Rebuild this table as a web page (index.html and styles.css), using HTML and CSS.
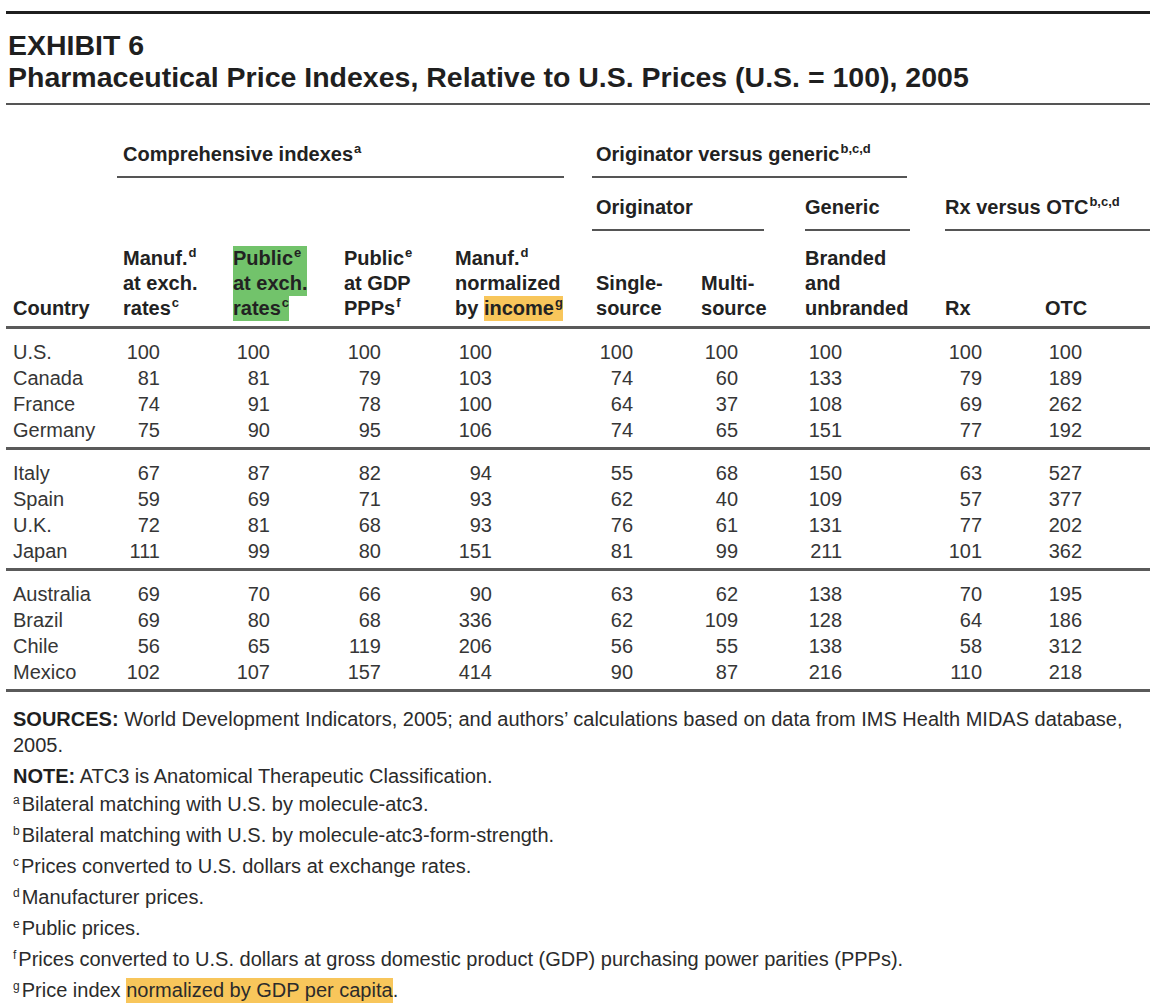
FILE: index.html
```html
<!DOCTYPE html>
<html lang="en">
<head>
<meta charset="utf-8">
<title>Exhibit 6</title>
<link rel="stylesheet" href="styles.css">
</head>
<body>
<div class="page">
  <div class="rule-top"></div>
  <h1 class="title">
    <span class="exhibit">EXHIBIT 6</span>
    <span class="subtitle">Pharmaceutical Price Indexes, Relative to U.S. Prices (U.S. = 100), 2005</span>
  </h1>
  <div class="rule-mid"></div>

  <table class="data">
    <colgroup>
      <col class="w0"><col class="w1"><col class="w2"><col class="w3"><col class="w4">
      <col class="w5"><col class="w6"><col class="w7"><col class="w8"><col class="w9">
    </colgroup>
    <thead>
      <tr class="hr1">
        <th></th>
        <th colspan="4"><div class="span-head sh-comp">Comprehensive indexes<sup>a</sup></div></th>
        <th colspan="3"><div class="span-head sh-ovg">Originator versus generic<sup>b,c,d</sup></div></th>
        <th colspan="2"></th>
      </tr>
      <tr class="hr2">
        <th></th>
        <th colspan="4"></th>
        <th colspan="2"><div class="span-head sh-orig">Originator</div></th>
        <th><div class="span-head sh-gen">Generic</div></th>
        <th colspan="2"><div class="span-head sh-rx">Rx versus OTC<sup>b,c,d</sup></div></th>
      </tr>
      <tr class="hr3">
        <th class="country">Country</th>
        <th>Manuf.<sup>d</sup><br>at exch.<br>rates<sup>c</sup></th>
        <th><span class="hl-green">Public<sup>e</sup>&nbsp;</span><br><span class="hl-green">at exch.</span><br><span class="hl-green">rates<sup>c</sup></span></th>
        <th>Public<sup>e</sup><br>at GDP<br>PPPs<sup>f</sup></th>
        <th>Manuf.<sup>d</sup><br>normalized<br>by <span class="hl-yellow">income<sup>g</sup></span></th>
        <th>Single-<br>source</th>
        <th>Multi-<br>source</th>
        <th>Branded<br>and<br>unbranded</th>
        <th>Rx</th>
        <th>OTC</th>
      </tr>
    </thead>
    <tbody>
      <tr><td class="country">U.S.</td><td><span class="n">100</span></td><td><span class="n">100</span></td><td><span class="n">100</span></td><td><span class="n">100</span></td><td><span class="n">100</span></td><td><span class="n">100</span></td><td><span class="n">100</span></td><td><span class="n">100</span></td><td><span class="n">100</span></td></tr>
      <tr><td class="country">Canada</td><td><span class="n">81</span></td><td><span class="n">81</span></td><td><span class="n">79</span></td><td><span class="n">103</span></td><td><span class="n">74</span></td><td><span class="n">60</span></td><td><span class="n">133</span></td><td><span class="n">79</span></td><td><span class="n">189</span></td></tr>
      <tr><td class="country">France</td><td><span class="n">74</span></td><td><span class="n">91</span></td><td><span class="n">78</span></td><td><span class="n">100</span></td><td><span class="n">64</span></td><td><span class="n">37</span></td><td><span class="n">108</span></td><td><span class="n">69</span></td><td><span class="n">262</span></td></tr>
      <tr><td class="country">Germany</td><td><span class="n">75</span></td><td><span class="n">90</span></td><td><span class="n">95</span></td><td><span class="n">106</span></td><td><span class="n">74</span></td><td><span class="n">65</span></td><td><span class="n">151</span></td><td><span class="n">77</span></td><td><span class="n">192</span></td></tr>
    </tbody>
    <tbody>
      <tr><td class="country">Italy</td><td><span class="n">67</span></td><td><span class="n">87</span></td><td><span class="n">82</span></td><td><span class="n">94</span></td><td><span class="n">55</span></td><td><span class="n">68</span></td><td><span class="n">150</span></td><td><span class="n">63</span></td><td><span class="n">527</span></td></tr>
      <tr><td class="country">Spain</td><td><span class="n">59</span></td><td><span class="n">69</span></td><td><span class="n">71</span></td><td><span class="n">93</span></td><td><span class="n">62</span></td><td><span class="n">40</span></td><td><span class="n">109</span></td><td><span class="n">57</span></td><td><span class="n">377</span></td></tr>
      <tr><td class="country">U.K.</td><td><span class="n">72</span></td><td><span class="n">81</span></td><td><span class="n">68</span></td><td><span class="n">93</span></td><td><span class="n">76</span></td><td><span class="n">61</span></td><td><span class="n">131</span></td><td><span class="n">77</span></td><td><span class="n">202</span></td></tr>
      <tr><td class="country">Japan</td><td><span class="n">111</span></td><td><span class="n">99</span></td><td><span class="n">80</span></td><td><span class="n">151</span></td><td><span class="n">81</span></td><td><span class="n">99</span></td><td><span class="n">211</span></td><td><span class="n">101</span></td><td><span class="n">362</span></td></tr>
    </tbody>
    <tbody>
      <tr><td class="country">Australia</td><td><span class="n">69</span></td><td><span class="n">70</span></td><td><span class="n">66</span></td><td><span class="n">90</span></td><td><span class="n">63</span></td><td><span class="n">62</span></td><td><span class="n">138</span></td><td><span class="n">70</span></td><td><span class="n">195</span></td></tr>
      <tr><td class="country">Brazil</td><td><span class="n">69</span></td><td><span class="n">80</span></td><td><span class="n">68</span></td><td><span class="n">336</span></td><td><span class="n">62</span></td><td><span class="n">109</span></td><td><span class="n">128</span></td><td><span class="n">64</span></td><td><span class="n">186</span></td></tr>
      <tr><td class="country">Chile</td><td><span class="n">56</span></td><td><span class="n">65</span></td><td><span class="n">119</span></td><td><span class="n">206</span></td><td><span class="n">56</span></td><td><span class="n">55</span></td><td><span class="n">138</span></td><td><span class="n">58</span></td><td><span class="n">312</span></td></tr>
      <tr><td class="country">Mexico</td><td><span class="n">102</span></td><td><span class="n">107</span></td><td><span class="n">157</span></td><td><span class="n">414</span></td><td><span class="n">90</span></td><td><span class="n">87</span></td><td><span class="n">216</span></td><td><span class="n">110</span></td><td><span class="n">218</span></td></tr>
    </tbody>
  </table>

  <div class="notes">
    <p class="src"><b>SOURCES:</b> World Development Indicators, 2005; and authors’ calculations based on data from IMS Health MIDAS database, 2005.</p>
    <p class="note"><b>NOTE:</b> ATC3 is Anatomical Therapeutic Classification.</p>
    <p class="fn first"><sup>a</sup>Bilateral matching with U.S. by molecule-atc3.</p>
    <p class="fn"><sup>b</sup>Bilateral matching with U.S. by molecule-atc3-form-strength.</p>
    <p class="fn"><sup>c</sup>Prices converted to U.S. dollars at exchange rates.</p>
    <p class="fn"><sup>d</sup>Manufacturer prices.</p>
    <p class="fn"><sup>e</sup>Public prices.</p>
    <p class="fn"><sup>f</sup>Prices converted to U.S. dollars at gross domestic product (GDP) purchasing power parities (PPPs).</p>
    <p class="fn"><sup>g</sup>Price index <span class="hl-yellow">normalized by GDP per capita</span>.</p>
  </div>
</div>
</body>
</html>
```

FILE: styles.css
```css
html, body {
  margin: 0;
  padding: 0;
  background: #ffffff;
}

body {
  font-family: "Liberation Sans", Arial, sans-serif;
  color: #2b2b2b;
}

.page {
  width: 1144px;
  padding: 11px 0 0 6px;
}

.rule-top {
  height: 3px;
  background: #1f1f1f;
}

.title {
  margin: 15px 0 0 0;
  font-family: "Liberation Sans", Arial, sans-serif;
  font-weight: 700;
  font-size: 28.5px;
  line-height: 32px;
  color: #1f1f1f;
  padding-left: 2px;
}

.title span {
  display: block;
}

.rule-mid {
  margin-top: 10px;
  height: 2px;
  background: #555555;
}

/* table */
.data {
  border-collapse: collapse;
  table-layout: fixed;
  width: 1144px;
  margin-top: 37px;
}

.w0 { width: 111px; }
.w1 { width: 110px; }
.w2 { width: 111px; }
.w3 { width: 111px; }
.w4 { width: 141px; }
.w5 { width: 105px; }
.w6 { width: 104px; }
.w7 { width: 140px; }
.w8 { width: 100px; }
.w9 { width: 111px; }

.data th {
  padding: 0 0 0 6px;
  font-weight: 700;
  font-size: 20px;
  line-height: 25px;
  text-align: left;
  vertical-align: bottom;
  color: #222222;
  white-space: nowrap;
}

.data th.country,
.data td.country {
  padding-left: 7px;
}

.data sup {
  font-size: 13px;
  line-height: 0;
  vertical-align: 0;
  position: relative;
  top: -8px;
  margin-left: 1px;
}

.span-head {
  padding-bottom: 9px;
  border-bottom: 2px solid #555555;
}

.hr1 th,
.hr2 th {
  padding-left: 0;
}

.sh-comp { margin-right: 26px; padding-left: 6px; }
.sh-ovg { margin-left: 2px; margin-right: 32px; padding-left: 4px; }
.hr2 th { padding-top: 17px; }
.sh-orig { margin-left: 2px; margin-right: 35px; padding-left: 4px; }
.sh-gen { margin-left: 6px; margin-right: 29px; }
.sh-rx { margin-left: 6px; }

.hr3 th {
  padding-top: 15px;
  padding-bottom: 5px;
  border-bottom: 3px solid #5a5a5a;
}

.hl-green {
  background: #72c36b;
  padding: 1px 0 2px;
}

.hl-yellow {
  background: #f8c65b;
  padding: 1px 0 2px;
}

.data td {
  padding: 0 0 0 6px;
  font-size: 20px;
  line-height: 26px;
  height: 26px;
  color: #363636;
  white-space: nowrap;
}

.data tbody tr:first-child td { padding-top: 10px; }
.data tbody tr:last-child td {
  padding-bottom: 4px;
  border-bottom: 3px solid #5a5a5a;
}

.n {
  display: inline-block;
  width: 37px;
  text-align: right;
}

/* notes */
.notes {
  padding: 14px 0 0 7px;
  font-size: 20px;
  line-height: 26px;
  color: #2b2b2b;
}

.notes p {
  margin: 5px 0 0 0;
}

.notes p.src { margin-top: 0; }
.notes p.fn.first { margin-top: 2px; }

.notes b {
  color: #1f1f1f;
}

.notes sup {
  font-size: 12px;
  line-height: 0;
  vertical-align: 0;
  position: relative;
  top: -7px;
  margin-right: 2px;
}
```
